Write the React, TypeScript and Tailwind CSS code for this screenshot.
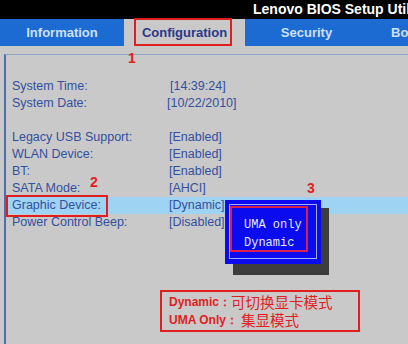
import React from 'react';

// Lenovo BIOS configuration page with annotated popup
const LABEL = '#33509f';
const RED = '#e01e1e';

const rows: { label: string; value: string; vx: number }[] = [
  { label: 'System Time:', value: '[14:39:24]', vx: 170 },
  { label: 'System Date:', value: '[10/22/2010]', vx: 167 },
  { label: '', value: '', vx: 0 },
  { label: 'Legacy USB Support:', value: '[Enabled]', vx: 169 },
  { label: 'WLAN Device:', value: '[Enabled]', vx: 169 },
  { label: 'BT:', value: '[Enabled]', vx: 169 },
  { label: 'SATA Mode:', value: '[AHCI]', vx: 169 },
  { label: 'Graphic Device:', value: '[Dynamic]', vx: 169 },
  { label: 'Power Control Beep:', value: '[Disabled]', vx: 169 },
];

function Tab({ label, active, w }: { label: string; active?: boolean; w: string }) {
  return (
    <div className={`${w} h-full flex items-center justify-center text-[13px] font-bold whitespace-nowrap ${active ? 'bg-[#c9c9c9] text-[#29388a]' : 'bg-[#1b6bd3] text-[#cfe0f5]'}`}>
      {label}
    </div>
  );
}

export default function App() {
  return (
    <div className="relative w-[408px] h-[344px] overflow-hidden bg-[#c9c9c9] flex flex-col" style={{ fontFamily: '"Liberation Sans", Arial, sans-serif' }}>
      <div className="h-[19px] shrink-0 bg-black text-white font-bold text-[14px] leading-[19px] pl-[253px] whitespace-nowrap overflow-hidden">
        Lenovo BIOS Setup Utility
      </div>
      <div className="h-[27px] shrink-0 flex">
        <Tab label="Information" w="w-[124px]" />
        <Tab label="Configuration" w="w-[121px]" active />
        <Tab label="Security" w="w-[123px]" />
        <div className="flex-1 bg-[#1b6bd3] text-[#cfe0f5] text-[13px] font-bold flex items-center pl-[23px] overflow-hidden whitespace-nowrap">Boot</div>
      </div>
      <div className="h-[8px] shrink-0" />
      <div className="flex-1 border-t border-t-[#8fa3c6] ml-[4px] border-l-2 border-l-[#4b6fae] pt-[23px]">
        {rows.map((r, i) => (
          <div key={i} className={`h-[17px] flex items-center text-[12.5px] ${r.label === 'Graphic Device:' ? 'bg-[#9fd3f3] ml-[2px]' : ''}`} style={{ color: LABEL }}>
            <span className={`${r.label === 'Graphic Device:' ? 'pl-[4px]' : 'pl-[6px]'} whitespace-nowrap`}>{r.label}</span>
            {r.value && (
              <span className="absolute whitespace-nowrap" style={{ left: r.vx }}>{r.value}</span>
            )}
          </div>
        ))}
      </div>

      {/* annotations */}
      <div className="absolute left-[134px] top-[18px] w-[98px] h-[28px] border-2 border-[#e01e1e]" />
      <div className="absolute left-[128px] top-[51px] text-[14px] font-bold leading-none" style={{ color: RED }}>1</div>
      <div className="absolute left-[6px] top-[195px] w-[102px] h-[22px] border-2 border-[#e01e1e]" />
      <div className="absolute left-[90px] top-[175px] text-[14px] font-bold leading-none" style={{ color: RED }}>2</div>
      <div className="absolute left-[307px] top-[181px] text-[14px] font-bold leading-none" style={{ color: RED }}>3</div>

      {/* popup */}
      <div className="absolute left-[233px] top-[208px] w-[96px] h-[67px] bg-[#3d3d3d]" />
      <div className="absolute left-[225px] top-[200px] w-[96px] h-[64px] bg-[#0b0bef]">
        <div className="absolute left-[4px] top-[4px] w-[88px] h-[55px] border border-[#9fb0ff]" />
        <div className="absolute left-[5px] top-[6px] w-[78px] h-[46px] border-2 border-[#d8204a]" />
        <div className="absolute left-[19px] top-[16px] text-[12px] leading-[18px] text-[#e4e8ff] whitespace-pre" style={{ fontFamily: '"Liberation Mono", "Courier New", monospace' }}>
          <div>UMA only</div>
          <div>Dynamic</div>
        </div>
      </div>

      {/* note */}
      <div className="absolute left-[160px] top-[290px] w-[200px] h-[42px] border-2 border-[#e01e1e] pl-[7px] pt-[1px] font-bold leading-[18px]" style={{ color: RED }}>
        <div className="flex items-center h-[18px] whitespace-nowrap">
          <span className="text-[12px] leading-[18px]">Dynamic：</span>
          <span className="text-[14.5px] leading-[18px] font-normal" style={{ fontFamily: '"Noto Sans CJK SC", sans-serif' }}>可切换显卡模式</span>
        </div>
        <div className="flex items-center h-[18px] whitespace-nowrap">
          <span className="text-[12px] leading-[18px]">UMA Only：</span>
          <span className="text-[14.5px] leading-[18px] font-normal ml-[3px]" style={{ fontFamily: '"Noto Sans CJK SC", sans-serif' }}>集显模式</span>
        </div>
      </div>
    </div>
  );
}
